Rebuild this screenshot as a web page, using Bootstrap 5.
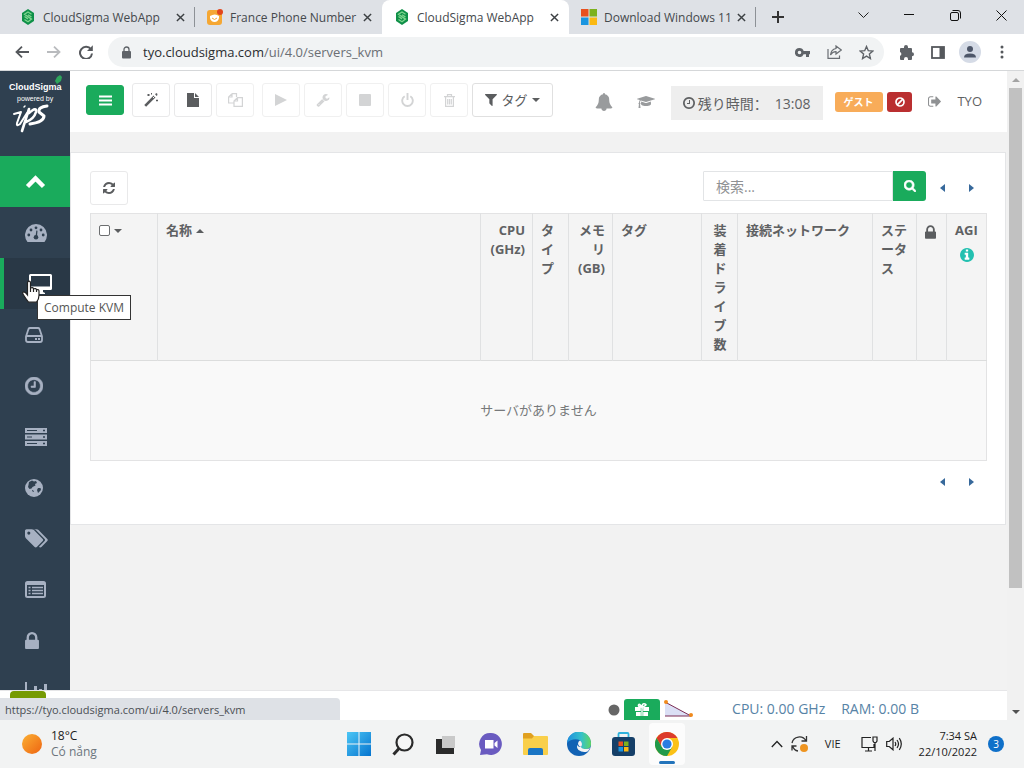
<!DOCTYPE html>
<html lang="ja">
<head>
<meta charset="utf-8">
<meta name="viewport" content="width=device-width, initial-scale=1">
<title>CloudSigma WebApp</title>
<link href="https://cdn.jsdelivr.net/npm/bootstrap@5.3.0/dist/css/bootstrap.min.css" rel="stylesheet">
<style>
  :root { --brand: #1aab5c; --navy: #2f4050; --ink: #5f6163; }
  body { font-family: "Open Sans", "Noto Sans CJK JP", sans-serif; font-size: 13px; line-height: 19px; color: var(--ink); background: #f2f2f2; }
  svg { display: block; flex: none; }
  a { text-decoration: none; color: inherit; }
  .bare { border: 0; background: none; padding: 0; color: inherit; display: flex; align-items: center; justify-content: center; flex: none; }

  /* browser frame */
  .tab-strip { height: 34px; background: #dee1e6; padding-left: 8px; font-size: 12px; color: #45494d; }
  .browser-tab { flex: 0 1 187px; min-width: 0; height: 34px; padding: 0 10px 0 12px; gap: 4px; }
  .browser-tab.current { background: #fff; border-radius: 8px 8px 0 0; }
  .tab-title { flex: 1; overflow: hidden; white-space: nowrap; padding-left: 3px; }
  .tab-rule { width: 1px; height: 20px; background: #8d9196; margin-left: -1px; }
  .new-tab { width: 44px; }
  .win-btn { width: 46px; height: 30px; color: #111; }
  .address-row { height: 37px; background: #fff; border-bottom: 1px solid #d5d7d9; padding: 0 6px; color: #5f6368; }
  .address-row .bare { width: 32px; height: 28px; }
  .omnibox { height: 30px; border-radius: 15px; background: #f1f3f4; margin: 0 6px 0 6px; padding: 0 2px 0 10px; }
  .address-text { font-size: 13px; color: #6b6f74; white-space: nowrap; }
  .address-text b { font-weight: 400; color: #2b2d30; }

  /* sidebar */
  .side { width: 70px; background: var(--navy); color: #a7b1c2; overflow: hidden; }
  .brand-box { height: 85px; flex: none; }
  .side-link { display: flex; align-items: center; height: 51px; padding-left: 25px; flex: none; }
  .side-link.toggle-up { background: var(--brand); color: #fff; }
  .side-link.active { background: #293846; color: #fff; border-left: 4px solid var(--brand); }
  .side-tip { position: absolute; left: 37px; top: 224px; height: 25px; border: 1px solid #333; background: #fff; color: #555; font-size: 12px; line-height: 23px; padding: 0 6px; white-space: nowrap; z-index: 5; }
  .hand { position: absolute; left: 22px; top: 209px; z-index: 6; }

  /* application header */
  .app-bar { min-height: 61px; background: #fff; padding: 12px 25px 12px 16px; }
  .tool { width: 38px; height: 34px; border: 1px solid #e9e9ea; border-radius: 3px; background: #fff; color: #5b5d5f; display: flex; align-items: center; justify-content: center; padding: 0; flex: none; }
  .tool:disabled { color: #d3d4d5; border-color: #f0f0f0; }
  .tool.main-tool { background: var(--brand); border-color: var(--brand); color: #fff; height: 30px; }
  .tool.tag-tool { width: 81px; gap: 4px; border-color: #e0e0e0; }
  .timer { background: #eee; height: 34px; padding: 0 13px 0 12px; font-size: 14px; gap: 3px; white-space: nowrap; margin: 3px 12px 0 0; font-family: "Open Sans", "Noto Sans CJK SC", sans-serif; }
  .pill { height: 20px; border-radius: 3px; color: #fff; font-size: 10px; font-weight: 700; line-height: 20px; padding: 0 8px; }
  .guest { background: #f8ac59; width: 48px; }
  .stop-pill { background: #ba2f30; width: 25px; }

  /* server panel */
  .panel { background: #fff; border: 1px solid #e4e5e7; margin: 20px 1px 0 0; padding: 18px 18px 25px 19px; }
  .search-form { margin-right: 14px; }
  .search-box { width: 190px; height: 30px; border: 1px solid #e2e4e6; border-radius: 1px 0 0 1px; font-size: 14px; padding: 0 12px; color: #666; outline: 0; }
  .search-box::placeholder { color: #8f9193; }
  .search-btn { width: 33px; height: 30px; background: var(--brand); color: #fff; border: 0; border-radius: 0 3px 3px 0; }
  .pager { color: #37699b; gap: 24px; padding-right: 13px; height: 34px; }
  .server-grid { width: 100%; table-layout: fixed; border-collapse: collapse; border: 1px solid #e3e3e4; }
  .server-grid th { background: #f4f4f4; border-left: 1px solid #e0e1e2; padding: 7px 7px 6px 8px; vertical-align: top; font-weight: 700; line-break: anywhere; }
  .server-grid td { background: #f9f9f9; border-top: 1px solid #dcdddd; height: 100px; text-align: center; vertical-align: middle; color: #77797b; }
  .server-grid input { appearance: none; width: 11px; height: 11px; border: 1px solid #6c6e70; border-radius: 2px; background: #fff; margin: 0; }

  /* footer strip and link bubble */
  .foot { height: 30px; background: #fff; border-top: 1px solid #e6e6e8; }
  .foot-badge { width: 36px; height: 20px; background: #769b03; border-radius: 4px 4px 0 0; margin-left: 10px; }
  .foot-tools { margin-top: 8px; }
  .gift-btn { width: 36px; height: 21px; background: var(--brand); color: #fff; border: 0; border-radius: 3px 3px 0 0; }
  .usage { font-size: 14px; color: #5783a6; white-space: nowrap; margin: 8px 88px 0 38px; }
  .link-bubble { position: absolute; left: 0; bottom: 0; width: 340px; height: 22px; background: #dee1e6; border-radius: 0 4px 0 0; padding-left: 5px; font-size: 11px; line-height: 23px; color: #4b4f54; z-index: 4; }

  .work-area { min-height: 0; }
  .scroll-rail { width: 17px; background: #f1f1f1; }
  .scroll-arrow { height: 17px; }
  .scroll-thumb { width: 13px; height: 77%; background: #c1c1c1; }

  .task-bar { height: 48px; background: #f2f3f3; color: #1c1c1c; font-size: 11px; line-height: 16px; }
  .task-side { flex: 1 1 0; }
  .task-side.weather { font-size: 12px; gap: 9px; padding-left: 22px; }
  .task-side.tray { padding-right: 20px; }
  .app-btn { width: 44px; height: 44px; }
  .app-btn.running { position: relative; }
  .app-btn.running::before { content: ""; position: absolute; inset: 1px 4px 1px 4px; background: #fcfcfc; border-radius: 4px; z-index: -1; }
  .app-btn.running::after { content: ""; position: absolute; bottom: 2px; left: 14px; width: 16px; height: 3px; border-radius: 2px; background: #2374bb; }
  .note-count { width: 16px; height: 16px; border-radius: 8px; background: #0f70c9; color: #fff; font-size: 10px; text-align: center; margin-left: 11px; }
</style>
</head>
<body class="vh-100 d-flex flex-column overflow-hidden">

<svg width="0" height="0" class="position-absolute" aria-hidden="true">
  <symbol id="sigma" viewBox="0 0 14 16"><path fill="#0f9048" d="M7 0l6 4v8l-6 4-6-4V4z"/><path fill="none" stroke="#7fd68f" stroke-width="1.3" d="M10.500 5.200L7 3 3.500 5.300l7 4.800L7 12.700l-3.500-2.200M3.500 7.500L7 9.900M7 5.800l3.500 2.200"/></symbol>
  <symbol id="cross" viewBox="0 0 10 10"><path stroke="#3c4043" stroke-width="1.600" d="M1 1l8 8M9 1L1 9"/></symbol>
  <symbol id="lock" viewBox="320 128 1152 1408"><path d="M640 768h512v-192q0-106-75-181t-181-75-181 75-75 181v192zm832 96v576q0 40-28 68t-68 28h-960q-40 0-68-28t-28-68v-576q0-40 28-68t68-28h32v-192q0-184 132-316t316-132 316 132 132 316v192h32q40 0 68 28t28 68z"/></symbol>
  <symbol id="clock" viewBox="128 128 1536 1536"><path d="M1024 544v448q0 14-9 23t-23 9h-320q-14 0-23-9t-9-23v-64q0-14 9-23t23-9h224v-352q0-14 9-23t23-9h64q14 0 23 9t9 23zm416 352q0-148-73-273t-198-198-273-73-273 73-198 198-73 273 73 273 198 198 273 73 273-73 198-198 73-273zm224 0q0 209-103 385.500t-279.500 279.500-385.500 103-385.500-103-279.500-279.500-103-385.500 103-385.500 279.500-279.500 385.500-103 385.500 103 279.500 279.500 103 385.500z"/></symbol>
  <symbol id="tri-l" viewBox="0 0 5 8"><path d="M5 0v8L0 4z"/></symbol>
  <symbol id="tri-r" viewBox="0 0 5 8"><path d="M0 0v8l5-4z"/></symbol>
  <symbol id="tri-d" viewBox="0 0 8 4"><path d="M0 0h8L4 4z"/></symbol>
  <symbol id="tri-u" viewBox="0 0 8 4"><path d="M0 4h8L4 0z"/></symbol>
</svg>

<header class="flex-shrink-0">
  <div class="tab-strip d-flex align-items-center">
    <div class="browser-tab d-flex align-items-center">
      <svg width="16" height="16"><use href="#sigma"/></svg><span class="tab-title">CloudSigma WebApp</span>
      <button class="bare" aria-label="Close tab"><svg width="9" height="9"><use href="#cross"/></svg></button>
    </div>
    <span class="tab-rule"></span>
    <div class="browser-tab d-flex align-items-center">
      <svg width="16" height="16" viewBox="0 0 16 16"><rect x="0" y="1" width="15" height="15" rx="3" fill="#f5a733"/><path d="M3 7q5-3 9 0v2q-1 4-4.500 4T3 9z" fill="#fff"/><path d="M5 9q2.500 3 5 0" stroke="#f5a733" fill="none"/><circle cx="13" cy="3" r="3" fill="#e2461c"/></svg><span class="tab-title">France Phone Number</span>
      <button class="bare" aria-label="Close tab"><svg width="9" height="9"><use href="#cross"/></svg></button>
    </div>
    <div class="browser-tab current d-flex align-items-center">
      <svg width="16" height="16"><use href="#sigma"/></svg><span class="tab-title">CloudSigma WebApp</span>
      <button class="bare" aria-label="Close tab"><svg width="9" height="9"><use href="#cross"/></svg></button>
    </div>
    <div class="browser-tab d-flex align-items-center">
      <svg width="16" height="16" viewBox="0 0 16 16"><path fill="#e8501f" d="M0 0h7.500v7.500H0z"/><path fill="#7db11c" d="M8.500 0H16v7.500H8.500z"/><path fill="#1a95e0" d="M0 8.500h7.500V16H0z"/><path fill="#fbb912" d="M8.500 8.500H16V16H8.500z"/></svg><span class="tab-title">Download Windows 11</span>
      <button class="bare" aria-label="Close tab"><svg width="9" height="9"><use href="#cross"/></svg></button>
    </div>
    <span class="tab-rule"></span>
    <button class="bare new-tab" aria-label="New tab"><svg width="12" height="12" viewBox="0 0 12 12"><path d="M6 0v12M0 6h12" stroke="#333" stroke-width="2"/></svg></button>
    <div class="d-flex ms-auto align-self-start">
      <button class="bare win-btn" aria-label="Search tabs"><svg width="11" height="7" viewBox="0 0 11 7"><path d="M.5.500l5 5 5-5" fill="none" stroke="#222"/></svg></button>
      <button class="bare win-btn" aria-label="Minimize"><svg width="10" height="2"><path d="M0 .500h10" stroke="#111"/></svg></button>
      <button class="bare win-btn" aria-label="Restore"><svg width="11" height="11" viewBox="0 0 11 11" fill="none" stroke="#111"><rect x=".5" y="2.500" width="8" height="8" rx="1.500"/><path d="M2.500.500H8q2.500 0 2.500 2.500v5.500"/></svg></button>
      <button class="bare win-btn" aria-label="Close"><svg width="11" height="11" viewBox="0 0 11 11"><path d="M.5.500l10 10M10.500.500l-10 10" stroke="#111"/></svg></button>
    </div>
  </div>
  <div class="address-row d-flex align-items-center">
    <button class="bare" aria-label="Back"><svg width="14" height="12" viewBox="0 0 14 12" fill="none" stroke="#55585c" stroke-width="1.800"><path d="M14 6H1.500M7 .700L1.500 6 7 11.300"/></svg></button>
    <button class="bare" aria-label="Forward"><svg width="14" height="12" viewBox="0 0 14 12" fill="none" stroke="#b9bbbe" stroke-width="1.800"><path d="M0 6h12.500M7 .700L12.500 6 7 11.300"/></svg></button>
    <button class="bare" aria-label="Reload"><svg width="14" height="14" viewBox="0 0 14 14"><path d="M12 4.500A6 6 0 1 0 13 8.500" fill="none" stroke="#55585c" stroke-width="2"/><path d="M13.800.300v5.800H8z" fill="#55585c"/></svg></button>
    <div class="omnibox d-flex align-items-center flex-grow-1">
      <svg width="9" height="13" viewBox="0 0 9 12" class="me-2 ms-1"><rect y="4.500" width="9" height="7.500" rx="1" fill="#5f6368"/><path d="M2 5V3a2.500 2.500 0 0 1 5 0v2" fill="none" stroke="#5f6368" stroke-width="1.300"/></svg>
      <span class="address-text flex-grow-1 ms-1"><b>tyo.cloudsigma.com</b>/ui/4.0/servers_kvm</span>
      <button class="bare" aria-label="Passwords"><svg width="15" height="9" viewBox="0 0 15 9"><path fill="#5f6368" fill-rule="evenodd" d="M4.500 0A4.500 4.500 0 1 0 8.600 6.200H11V9h3V6.200h1V3H8.700A4.500 4.500 0 0 0 4.500 0zm0 2.700a1.800 1.800 0 1 1 0 3.600 1.800 1.800 0 0 1 0-3.600z"/></svg></button>
      <button class="bare" aria-label="Share"><svg width="15" height="14" viewBox="0 0 15 14" fill="none" stroke="#6a6e73" stroke-width="1.200"><path d="M1 4v9.400h11.500v-3"/><path d="M9 1l5.300 4L9 9V6.600Q5.500 6.500 3.500 10 4 4.500 9 3.500z"/></svg></button>
      <button class="bare" aria-label="Bookmark"><svg width="15" height="15" viewBox="0 0 15 15"><path d="M7.500 1.500l1.800 4.200 4.500.400-3.400 3 1 4.400-3.900-2.400-3.900 2.400 1-4.400-3.400-3 4.500-.400z" fill="none" stroke="#5f6368" stroke-width="1.400"/></svg></button>
    </div>
    <button class="bare" aria-label="Extensions"><svg width="15" height="15" viewBox="0 0 15 15"><path fill="#5f6368" d="M5 3V2a2 2 0 0 1 4 0v1h3q1 0 1 1v3.200a2 2 0 0 1 0 4V14q0 1-1 1H9v-1a2 2 0 0 0-4 0v1H2q-1 0-1-1v-3.200a2 2 0 0 0 0-3.800V4q0-1 1-1z"/></svg></button>
    <button class="bare" aria-label="Side panel"><svg width="14" height="13" viewBox="0 0 14 13"><rect x="1" y="1" width="12" height="11" fill="none" stroke="#55585c" stroke-width="1.800"/><path fill="#55585c" d="M8.500 1H13v11H8.500z"/></svg></button>
    <button class="bare" aria-label="Profile"><svg width="22" height="22" viewBox="0 0 22 22"><circle cx="11" cy="11" r="11" fill="#d5dbe6"/><circle cx="11" cy="8" r="3" fill="#4d5669"/><path fill="#4d5669" d="M5 16.500q0-4 6-4t6 4z"/></svg></button>
    <button class="bare" aria-label="Menu"><svg width="4" height="14" viewBox="0 0 4 14" fill="#55585c"><circle cx="2" cy="2" r="1.500"/><circle cx="2" cy="7" r="1.500"/><circle cx="2" cy="12" r="1.500"/></svg></button>
  </div>
</header>

<div class="work-area d-flex flex-grow-1 position-relative">
  <div class="d-flex flex-column flex-grow-1 overflow-hidden">
    <div class="work-area d-flex flex-grow-1">
      <nav class="side d-flex flex-column flex-shrink-0">
        <a href="#" class="brand-box" aria-label="CloudSigma powered by IPS">
          <svg width="70" height="85" viewBox="0 0 70 85" fill="#fff" font-family="Liberation Sans, sans-serif">
            <text x="9" y="19" font-size="9" font-weight="700">CloudSigma</text>
            <text x="17" y="30" font-size="7">powered by</text>
            <path d="M57 6l3-2 2 2-1 4-4 3-2-3z" fill="#2ea55c"/>
            <g fill="none" stroke="#fff" stroke-linecap="round" stroke-linejoin="round"><path stroke-width="2" d="M14 43l7-2-4 11q-1 4 3 1l7-11"/><path stroke-width="2.600" d="M29 38L22 60M29 42q8-7 7-1-2 7-10 10"/><path stroke-width="3" d="M47 35q-9 1-8 6l5 4q0 6-14 8"/><path stroke-width="1.500" d="M24 36l1-1"/></g>
          </svg>
        </a>
        <a href="#" class="side-link toggle-up" aria-label="Collapse"><svg width="21" height="15" viewBox="0 0 21 15"><path d="M2.500 12.500l8-8 8 8" fill="none" stroke="#fff" stroke-width="4.500"/></svg></a>
        <a href="#" class="side-link" aria-label="Dashboard"><svg width="22" height="18" viewBox="0 0 22 18"><path fill="#a7b1c2" d="M2.500 18A11 11 0 1 1 19.500 18z"/><g fill="#2f4050"><circle cx="3.800" cy="11" r="1.400"/><circle cx="6" cy="6" r="1.400"/><circle cx="11" cy="3.800" r="1.400"/><circle cx="16" cy="6" r="1.400"/><circle cx="18.200" cy="11" r="1.400"/><circle cx="11" cy="13.300" r="2.300"/><path d="M10.500 13l.8-6.500 1.200.200-.600 6.500z"/></g></svg></a>
        <a href="#" class="side-link active" aria-label="Compute KVM"><svg width="23" height="20" viewBox="0 0 23 20"><path fill="#fff" fill-rule="evenodd" d="M1.500 0h20Q23 0 23 1.500v13q0 1.500-1.500 1.500H14v2l2 1v1H7v-1l2-1v-2H1.500Q0 16 0 14.500v-13Q0 0 1.500 0zM2 2v10.500h19V2z"/></svg></a>
        <a href="#" class="side-link" aria-label="Drives"><svg width="18" height="16" viewBox="0 0 18 16"><path d="M1 9.500L3.500 2Q4 1 5 1h8q1 0 1.500 1L17 9.500V13q0 2-2 2H3q-2 0-2-2zM1.500 9h15" fill="none" stroke="#a7b1c2" stroke-width="1.800"/><path fill="#a7b1c2" d="M10 11h2v2h-2zM13 11h2v2h-2z"/></svg></a>
        <a href="#" class="side-link" aria-label="Snapshots"><svg width="18" height="18" fill="#a7b1c2" stroke="#a7b1c2" stroke-width="50"><use href="#clock"/></svg></a>
        <a href="#" class="side-link" aria-label="Servers"><svg width="22" height="18" viewBox="0 0 22 18"><path fill="#a7b1c2" d="M0 0h22v5H0zM0 6.500h22v5H0zM0 13h22v5H0z"/><path stroke="#2f4050" stroke-width="1.200" d="M2 2.500h10M2 9h5M2 15.500h10"/><path fill="#2f4050" d="M18 1.800h2v1.500h-2zM18 8.300h2v1.500h-2zM18 14.800h2v1.500h-2z"/></svg></a>
        <a href="#" class="side-link" aria-label="Networks"><svg width="18" height="18" viewBox="0 0 18 18"><circle cx="9" cy="9" r="9" fill="#a7b1c2"/><path fill="#2f4050" d="M4 3l3-1.500 2 1 2-.5 1 2-2 1 .5 1.500-3 1.500-1 1.500-2 .5L3 8l.5-2zM13 9l2.500 0 .5 2-3 3-1-3zM7 11l2 1-.5 1-1.500-1z"/></svg></a>
        <a href="#" class="side-link" aria-label="Tags"><svg width="23" height="19" viewBox="0 128 1920 1540" fill="#a7b1c2"><path d="M448 448q0-53-37.500-90.500t-90.500-37.500-90.500 37.500-37.500 90.500 37.500 90.500 90.500 37.500 90.500-37.500 37.500-90.500zm1067 576q0 53-37 90l-491 492q-39 37-91 37-53 0-90-37l-715-716q-38-37-64.500-101t-26.500-117v-416q0-52 38-90t90-38h416q53 0 117 26.500t102 64.500l715 714q37 39 37 91zm384 0q0 53-37 90l-491 492q-39 37-91 37-36 0-59-14t-53-45l470-470q37-37 37-90 0-52-37-91l-715-714q-38-38-102-64.500t-117-26.500h224q53 0 117 26.500t102 64.500l715 714q37 39 37 91z"/></svg></a>
        <a href="#" class="side-link" aria-label="Policies"><svg width="21" height="17" viewBox="0 0 21 17"><rect x="1" y="1" width="19" height="15" rx="1.500" fill="none" stroke="#a7b1c2" stroke-width="2"/><path d="M1 2.500h19" stroke="#a7b1c2" stroke-width="3"/><path d="M3.500 6.500h2M7 6.500h11M3.500 9.500h2M7 9.500h11M3.500 12.500h2M7 12.500h11" stroke="#a7b1c2" stroke-width="1.600"/></svg></a>
        <a href="#" class="side-link" aria-label="Access"><svg width="14" height="17" fill="#a7b1c2"><use href="#lock"/></svg></a>
        <a href="#" class="side-link" aria-label="Reports"><svg width="22" height="20" viewBox="0 0 22 20" fill="#a7b1c2"><path d="M0 0h2v18h20v2H0zM9 4h3v12H9zM14 7h3v9h-3zM19 2h3v14h-3z"/></svg></a>
      </nav>

      <div class="flex-grow-1 overflow-hidden">
        <div class="app-bar d-flex align-items-start">
          <div class="d-flex align-items-center gap-1">
            <button class="tool main-tool me-1" aria-label="Menu"><svg width="13" height="11" viewBox="0 0 13 11"><path stroke="#fff" stroke-width="2" d="M0 1.500h13M0 5.500h13M0 9.500h13"/></svg></button>
            <button class="tool" aria-label="Wizard"><svg width="14" height="14" viewBox="0 0 14 14"><path d="M1.200 12.800L10.500 3.500" stroke="#5b5d5f" stroke-width="2.600"/><path d="M9 5l1.600-1.600" stroke="#fff"/><path fill="#5b5d5f" d="M4 1h1v2H4zM3 1.500h3v1H3zM7 0h1v1.500H7zM12.500 6.500h1v2h-1zM12 7h2v1h-2zM11 1l2-1 .5 2-1 1z"/></svg></button>
            <button class="tool" aria-label="New server"><svg width="12" height="14" viewBox="0 0 12 14" fill="#5b5d5f"><path d="M0 0h7v5h5v9H0zM8 0l4 4H8z"/></svg></button>
            <button class="tool me-1" disabled aria-label="Clone"><svg width="15" height="14" viewBox="0 0 15 14" fill="none" stroke="#d3d4d5" stroke-width="1.200"><path d="M4 .600h4.500V4M4 .600L.600 4v6h5M4 .600V4H.600M9.500 4.600h4.900v8.800H6V8zM9.500 4.600V8H6"/></svg></button>
            <button class="tool" disabled aria-label="Start"><svg width="12" height="12" viewBox="0 0 12 12"><path fill="#d3d4d5" d="M0 0l12 6-12 6z"/></svg></button>
            <button class="tool" disabled aria-label="Properties"><svg width="14" height="14" viewBox="0 0 1792 1792"><path fill="#d3d4d5" d="M448 1472q0-26-19-45t-45-19-45 19-19 45 19 45 45 19 45-19 19-45zm644-420l-682 682q-37 37-90 37-52 0-91-37l-106-108q-38-36-38-90 0-53 38-91l681-681q39 98 114.500 173.500t173.500 114.500zm634-435q0 39-23 106-47 134-164.500 217.500t-258.500 83.500q-185 0-316.500-131.500t-131.500-316.500 131.500-316.500 316.500-131.500q58 0 121.500 16.500t107.500 46.500q16 11 16 28t-16 28l-293 169v224l193 107q5-3 79-48.500t135.500-81 70.500-35.500q15 0 23.500 10t8.500 25z"/></svg></button>
            <button class="tool" disabled aria-label="Stop"><svg width="12" height="12"><rect width="12" height="12" rx="1" fill="#d3d4d5"/></svg></button>
            <button class="tool" disabled aria-label="Shutdown"><svg width="13" height="14" viewBox="0 0 13 14" fill="none" stroke="#d3d4d5" stroke-width="1.900"><path d="M3.700 3.200a5.300 5.300 0 1 0 5.600 0M6.500 0v7"/></svg></button>
            <button class="tool" disabled aria-label="Delete"><svg width="11" height="13" viewBox="0 0 11 13" fill="none" stroke="#d3d4d5" stroke-width="1.200"><path d="M0 2.600h11M3.500 2.500V.600h4v1.900M1.600 3v9.400h7.800V3M3.700 5v5.500M5.500 5v5.500M7.300 5v5.500"/></svg></button>
            <button class="tool tag-tool"><svg width="12" height="12" viewBox="190 256 1420 1410" fill="#5b5d5f"><path d="M1595 295q17 41-14 70l-493 493v742q0 42-39 59-13 5-25 5-27 0-45-19l-256-256q-19-19-19-45v-486l-493-493q-31-29-14-70 17-39 59-39h1280q42 0 59 39z"/></svg>タグ<svg width="8" height="4" fill="#5b5d5f"><use href="#tri-d"/></svg></button>
          </div>
          <div class="d-flex align-items-center ms-auto">
            <svg class="me-4" width="18" height="18" viewBox="64 0 1664 1792" fill="#999b9d"><path d="M1728 1408q0 52-38 90t-90 38h-448q0 106-75 181t-181 75-181-75-75-181h-448q-52 0-90-38t-38-90q50-42 91-88t85-119.500 74.500-158.500 50-206 19.500-260q0-152 117-282.500t307-158.500q-8-19-8-39 0-40 28-68t68-28 68 28 28 68q0 20-8 39 190 28 307 158.500t117 282.500q0 139 19.500 260t50 206 74.500 158.500 85 119.500 91 88z"/></svg>
            <svg class="me-3" width="18" height="14" viewBox="0 0 2304 1792" fill="#999b9d"><path d="M1774 836l18 316q4 69-82 128t-235 93.500-323 34.500-323-34.500-235-93.500-82-128l18-316 574 181q22 7 48 7t48-7zm530-324q0 23-22 31l-1120 352q-4 1-10 1t-10-1l-652-206q-43 34-71 111.500t-34 178.500q63 36 63 109 0 69-58 107l58 433q2 14-8 25-9 11-24 11h-192q-15 0-24-11-10-11-8-25l58-433q-58-38-58-107 0-73 65-111 11-207 98-330l-333-104q-22-8-22-31t22-31l1120-352q4-1 10-1t10 1l1120 352q22 8 22 31z"/></svg>
            <div class="timer d-flex align-items-center"><svg width="12" height="12" fill="#5f6163"><use href="#clock"/></svg><span>残り時間<span lang="zh-CN">：</span></span><span class="ms-1">13:08</span></div>
            <span class="pill guest me-1">ゲスト</span>
            <span class="pill stop-pill d-flex align-items-center"><svg width="10" height="10" viewBox="0 0 10 10" fill="none" stroke="#fff" stroke-width="1.700"><circle cx="5" cy="5" r="4"/><path d="M2.200 7.800l5.600-5.600"/></svg></span>
            <a href="#" class="ms-3" aria-label="Log out"><svg width="13" height="11" viewBox="64 256 1568 1280" fill="#8f9193"><path d="M704 1440q0 4 1 20t.5 26.500-3 23.500-10 19.500-20.500 6.500h-320q-119 0-203.500-84.500t-84.500-203.500v-704q0-119 84.500-203.500t203.500-84.500h320q13 0 22.500 9.500t9.500 22.500q0 4 1 20t.5 26.500-3 23.500-10 19.500-20.500 6.500h-320q-66 0-113 47t-47 113v704q0 66 47 113t113 47h312l11.500 1 11.500 3 8 5.500 7 9 2 13.500zm928-544q0 26-19 45l-544 544q-19 19-45 19t-45-19-19-45v-288h-448q-26 0-45-19t-19-45v-384q0-26 19-45t45-19h448v-288q0-26 19-45t45-19 45 19l544 544q19 19 19 45z"/></svg></a>
            <a href="#" class="ms-3">TYO</a>
          </div>
        </div>

        <main class="panel">
          <div class="d-flex align-items-start mb-2">
            <button class="tool" aria-label="Refresh"><svg width="12" height="12" viewBox="128 128 1536 1536" fill="#5b5d5f"><path d="M1639 1056q0 5-1 7-64 268-268 434.500t-478 166.500q-146 0-282.500-55t-243.500-157l-129 129q-19 19-45 19t-45-19-19-45v-448q0-26 19-45t45-19h448q26 0 45 19t19 45-19 45l-137 137q71 66 161 102t187 36q134 0 250-65t186-179q11-17 53-117 8-23 30-23h192q13 0 22.500 9.500t9.500 22.500zm25-800v448q0 26-19 45t-45 19h-448q-26 0-45-19t-19-45 19-45l138-138q-148-137-349-137-134 0-250 65t-186 179q-11 17-53 117-8 23-30 23h-199q-13 0-22.500-9.500t-9.500-22.500v-7q65-268 270-434.500t480-166.500q146 0 284 55.500t245 156.500l130-129q19-19 45-19t45 19 19 45z"/></svg></button>
            <form class="search-form d-flex ms-auto">
              <input class="search-box" type="search" placeholder="検索..." aria-label="検索">
              <button class="bare search-btn" type="button" aria-label="検索する"><svg width="12" height="12" viewBox="64 128 1664 1664" fill="#fff" stroke="#fff" stroke-width="90"><path d="M1216 832q0-185-131.500-316.500t-316.500-131.500-316.500 131.500-131.500 316.500 131.500 316.500 316.500 131.500 316.500-131.500 131.500-316.500zm512 832q0 52-38 90t-90 38q-54 0-90-38l-343-342q-179 124-399 124-143 0-273.500-55.500t-225-150-150-225-55.500-273.500 55.500-273.500 150-225 225-150 273.500-55.500 273.500 55.500 225 150 150 225 55.500 273.500q0 220-124 399l343 343q37 37 37 90z"/></svg></button>
            </form>
            <div class="pager d-flex align-items-center"><a href="#" aria-label="Previous"><svg width="5" height="8" fill="#37699b"><use href="#tri-l"/></svg></a><a href="#" aria-label="Next"><svg width="5" height="8" fill="#37699b"><use href="#tri-r"/></svg></a></div>
          </div>
          <table class="server-grid">
            <colgroup><col style="width:67px"><col><col style="width:52px"><col style="width:36px"><col style="width:44px"><col style="width:89px"><col style="width:36px"><col style="width:135px"><col style="width:44px"><col style="width:30px"><col style="width:40px"></colgroup>
            <thead><tr>
              <th><span class="d-flex align-items-center pt-1"><input type="checkbox" class="me-1" aria-label="すべて選択"><svg width="8" height="4" fill="#5b5d5f"><use href="#tri-d"/></svg></span></th>
              <th><span class="d-flex align-items-center gap-1">名称<svg width="8" height="4" fill="#5b5d5f"><use href="#tri-u"/></svg></span></th>
              <th class="text-end">CPU<br>(GHz)</th>
              <th>タイプ</th>
              <th class="text-end">メモリ<br>(GB)</th>
              <th>タグ</th>
              <th class="text-center">装着ドライブ数</th>
              <th>接続ネットワーク</th>
              <th>ステータス</th>
              <th><svg width="11" height="14" class="mt-1" fill="#5b5d5f" aria-label="Locked"><use href="#lock"/></svg></th>
              <th>AGI<svg class="mt-2 mx-auto" width="14" height="14" viewBox="128 128 1536 1536" fill="#23c0b0"><circle cx="896" cy="896" r="740" fill="#fff"/><path d="M1152 1376v-160q0-14-9-23t-23-9h-96v-512q0-14-9-23t-23-9h-320q-14 0-23 9t-9 23v160q0 14 9 23t23 9h96v320h-96q-14 0-23 9t-9 23v160q0 14 9 23t23 9h448q14 0 23-9t9-23zm-128-896v-160q0-14-9-23t-23-9h-192q-14 0-23 9t-9 23v160q0 14 9 23t23 9h192q14 0 23-9t9-23zm640 416q0 209-103 385.500t-279.500 279.500-385.500 103-385.500-103-279.500-279.500-103-385.500 103-385.500 279.500-279.500 385.500-103 385.500 103 279.500 279.500 103 385.500z"/></svg></th>
            </tr></thead>
            <tbody><tr><td colspan="11">サーバがありません</td></tr></tbody>
          </table>
          <div class="pager d-flex align-items-center justify-content-end mt-1"><a href="#" aria-label="Previous"><svg width="5" height="8" fill="#37699b"><use href="#tri-l"/></svg></a><a href="#" aria-label="Next"><svg width="5" height="8" fill="#37699b"><use href="#tri-r"/></svg></a></div>
        </main>
      </div>
    </div>

    <footer class="foot d-flex align-items-start flex-shrink-0">
      <div class="foot-badge me-auto"></div>
      <div class="foot-tools d-flex align-items-center">
        <svg width="12" height="12" class="me-1"><circle cx="6" cy="6" r="5.500" fill="#666"/></svg>
        <button class="bare gift-btn" aria-label="Promotions"><svg width="14" height="13" viewBox="0 0 14 13"><path fill="#fff" d="M0 4h5.800v4H0zM8.200 4H14v4H8.200zM1 9h4.800v4H1zM8.200 9H13v4H8.200zM6.300 4h1.400v9H6.300z"/><path d="M7 4Q3 4 3.500 2T7 4q0-4 3-3t-3 3" fill="none" stroke="#fff" stroke-width="1.500"/></svg></button>
        <svg width="30" height="20" viewBox="0 0 30 20" class="ms-1"><path d="M1 2v14h26z" fill="#dbdff5"/><path d="M1 16h26L1 2" fill="none" stroke="#7b2d55"/><circle cx="2" cy="2" r="2" fill="#f08a1c"/><circle cx="27" cy="15" r="2" fill="#f08a1c"/></svg>
      </div>
      <div class="usage d-flex gap-3"><span>CPU: 0.00 GHz</span><span>RAM: 0.00 B</span></div>
    </footer>
  </div>

  <div class="scroll-rail d-flex flex-column align-items-center flex-shrink-0">
    <div class="scroll-arrow d-flex align-items-center"><svg width="8" height="4" fill="#a3a3a3"><use href="#tri-u"/></svg></div>
    <div class="scroll-thumb"></div>
    <div class="scroll-arrow d-flex align-items-center mt-auto"><svg width="8" height="4" fill="#505050"><use href="#tri-d"/></svg></div>
  </div>

  <div class="side-tip" role="tooltip">Compute KVM</div>
  <svg class="hand" width="18" height="23" viewBox="0 0 18 23"><path fill="#fff" stroke="#222" stroke-width="1.200" d="M5.500 13V3q0-1.800 1.500-1.800T8.500 3v5q2.500-1 3 .800 2.500-.800 3 .900 2.500-.500 2.500 1.500v4q0 4-2.500 7h-8Q4 19 1.200 14.500 0 12.500 1.500 12t4 3zM8.500 8v4M11.500 8.800V12M14.500 9.700V12"/></svg>
  <div class="link-bubble">https://tyo.cloudsigma.com/ui/4.0/servers_kvm</div>
</div>

<footer class="task-bar d-flex align-items-center flex-shrink-0">
  <div class="task-side weather d-flex align-items-center">
    <svg width="20" height="20" viewBox="0 0 20 20"><defs><linearGradient id="sun" x1="0" y1="0" x2="1" y2="1"><stop stop-color="#fbb034"/><stop offset="1" stop-color="#ee6411"/></linearGradient></defs><circle cx="10" cy="10" r="10" fill="url(#sun)"/></svg>
    <div><div>18°C</div><div class="text-secondary">Có nắng</div></div>
  </div>
  <div class="d-flex position-relative z-0">
    <button class="bare app-btn" aria-label="Start"><svg width="24" height="24" viewBox="0 0 24 24"><defs><linearGradient id="win" x1="0" y1="0" x2="1" y2="1"><stop stop-color="#4cc6f5"/><stop offset="1" stop-color="#0674cf"/></linearGradient></defs><path fill="url(#win)" d="M0 0h11.500v11.500H0zM12.500 0H24v11.500H12.500zM0 12.500h11.500V24H0zM12.500 12.500H24V24H12.500z"/></svg></button>
    <button class="bare app-btn" aria-label="Search"><svg width="22" height="23" viewBox="0 0 22 23" fill="none" stroke="#2a2a2a"><circle cx="12.500" cy="9.500" r="8" stroke-width="2.200" fill="#f5f5f5"/><path d="M7 15.500L1.500 21.500" stroke-width="3"/></svg></button>
    <button class="bare app-btn" aria-label="Task view"><svg width="22" height="22" viewBox="0 0 22 22"><path fill="#2b2b2b" d="M0 6h18v15H0z"/><path fill="#c9c9c9" d="M6 3h13v12H6z"/></svg></button>
    <button class="bare app-btn" aria-label="Chat"><svg width="24" height="24" viewBox="0 0 24 24"><path fill="#6a5bc0" d="M12 1a11 11 0 1 1-4 21.300L1 23l1-5A11 11 0 0 1 12 1z"/><path fill="#fff" d="M6 8h8.500v8.500H6zM15.500 11l3-2.500v7.500l-3-2.500z"/></svg></button>
    <button class="bare app-btn" aria-label="File Explorer"><svg width="25" height="22" viewBox="0 0 25 22"><path fill="#e0a020" d="M0 1q0-1 1-1h7l3 3v4H0z"/><rect y="3" x="0" width="25" height="19" rx="1" fill="#f9cf4a"/><path fill="#e0a020" d="M0 3h11l-2 2.500H0z"/><path fill="#1a75c4" d="M5 22v-5q0-2 2-2h11q2 0 2 2v5z"/></svg></button>
    <button class="bare app-btn" aria-label="Edge"><svg width="24" height="24" viewBox="0 0 24 24"><defs><linearGradient id="edgeTop"><stop stop-color="#1f8fe0"/><stop offset=".6" stop-color="#35c1c9"/><stop offset="1" stop-color="#5fd663"/></linearGradient></defs><circle cx="12" cy="12" r="12" fill="#1262b4"/><path fill="url(#edgeTop)" d="M0 11A12 12 0 0 1 24 12q0 5-6 5-4 0-4-2 1-1 1-3 0-3.500-4-4.500Q4 6.500 0 11z"/><path fill="#f3f3f3" d="M14 15q-2 0-3-3 0-3 2-3.500 2 1.200 2 3.500 0 2-1 3 1 2 5 2 3 0 4-1.500-.500 2-2.500 4-5 1.500-9-1.500-2-2-1.500-5 1.500 2 3 2z"/></svg></button>
    <button class="bare app-btn" aria-label="Microsoft Store"><svg width="23" height="24" viewBox="0 0 23 24"><path d="M6.500 5V2q0-1 1-1h8q1 0 1 1v3" fill="none" stroke="#2fb2dd" stroke-width="1.800"/><rect y="5" width="23" height="19" rx="3" fill="#153f68"/><path fill="#e8501f" d="M6.500 9.500H11V14H6.500z"/><path fill="#7db11c" d="M12 9.500h4.500V14H12z"/><path fill="#1a95e0" d="M6.500 15H11v4.500H6.500z"/><path fill="#fbb912" d="M12 15h4.500v4.500H12z"/></svg></button>
    <button class="bare app-btn running" aria-label="Chrome"><svg width="24" height="24" viewBox="0 0 24 24"><circle cx="12" cy="12" r="12" fill="#fbc116"/><path fill="#dc3b2c" d="M1.600 6A12 12 0 0 1 22.400 6H12l-5.200 9z"/><path fill="#21994a" d="M1.600 6A12 12 0 0 0 12 24l5.200-9H6.800z"/><circle cx="12" cy="12" r="6" fill="#fff"/><circle cx="12" cy="12" r="4.600" fill="#2a7de1"/></svg></button>
  </div>
  <div class="task-side tray d-flex align-items-center justify-content-end">
    <button class="bare" aria-label="Hidden icons"><svg width="12" height="8" viewBox="0 0 12 8"><path d="M.8 7L6 1.500 11.200 7" fill="none" stroke="#222" stroke-width="1.300"/></svg></button>
    <svg class="mx-2" width="18" height="18" viewBox="0 0 18 18" fill="none" stroke="#333" stroke-width="1.300"><path d="M1 8a7.500 7.500 0 0 1 14-2M15.500 1v5h-5M7 16q-4-.500-5.500-5M1 15.500V11h4.500"/><circle cx="13" cy="13" r="4" fill="#ee9420" stroke="none"/></svg>
    <span class="ms-2 me-1">VIE</span>
    <svg class="ms-3 me-2" width="17" height="16" viewBox="0 0 17 16" fill="none" stroke="#222" stroke-width="1.200"><path d="M10 1.500H1v10h12V8M4 15h7M7.500 12v3M12 1h4v4l-1 1.500h-2L12 5zM14 6.500V15"/></svg>
    <svg width="17" height="14" viewBox="0 0 17 14" fill="none" stroke="#222" stroke-width="1.200"><path d="M.7 4.500h2.500L7 1.200v11.600L3.200 9.500H.700zM9 5q1.500 2 0 4M11 3q3 4 0 8M13.300 1.200q4 5.800 0 11.600"/></svg>
    <div class="text-end ms-3"><div>7:34 SA</div><div>22/10/2022</div></div>
    <span class="note-count">3</span>
  </div>
</footer>
<script src="https://cdn.jsdelivr.net/npm/bootstrap@5.3.0/dist/js/bootstrap.bundle.min.js"></script>
</body>
</html>
